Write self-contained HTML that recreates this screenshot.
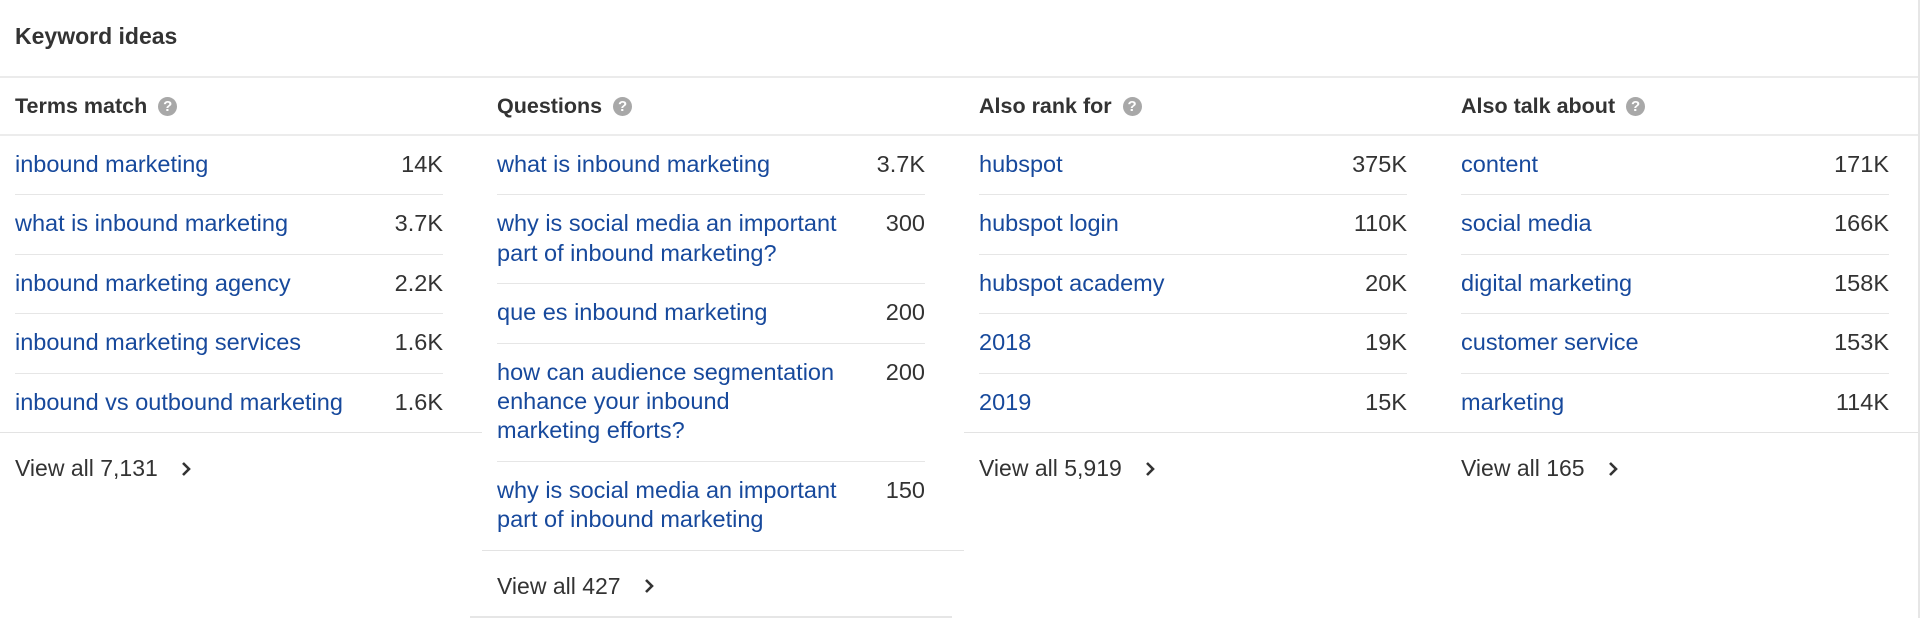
<!DOCTYPE html>
<html><head><meta charset="utf-8"><style>
*{box-sizing:border-box;margin:0;padding:0}
body{width:1920px;height:618px;background:#fff;font-family:"Liberation Sans",sans-serif;color:#333;overflow:hidden;position:relative}
.wrap{position:absolute;left:0;top:0;width:1920px;height:618px;border-right:2px solid #e6e6e6}
.title{height:78px;line-height:72px;padding-left:15px;font-weight:bold;font-size:23px;color:#333;border-bottom:2px solid #ebebeb}
.cols{display:flex}
.col{width:482px;flex:0 0 482px}
.col:last-child{width:472px;flex:0 0 472px}
.hd{height:58px;display:flex;align-items:center;padding-left:15px;font-weight:bold;font-size:21.5px;color:#333;border-bottom:2px solid #ececec}
.q{display:inline-block;width:19px;height:19px;border-radius:50%;background:#a8a8a8;color:#fff;font-size:15px;line-height:19px;text-align:center;margin-left:11px;font-weight:bold}
.rows{padding:0 39px 0 15px}
.col:last-child .rows{padding-right:29px}
.row{display:flex;justify-content:space-between;padding:14px 0 15px;border-bottom:1px solid #e6e6e6;font-size:23.5px;line-height:29.4px}
.row:last-child{border-bottom:none}
.row a{color:#17499c;text-decoration:none}
.row span{color:#333;padding-left:20px}
.ft{border-top:1px solid #e3e3e3;height:72px;padding-left:15px;display:flex;align-items:center;font-size:23px;color:#333}
.ft svg{margin-left:22px}
</style></head><body><div class="wrap">
<div class="title">Keyword ideas</div>
<div class="cols">
<div class="col"><div class="hd">Terms match<span class="q">?</span></div>
<div class="rows">
<div class="row"><a>inbound marketing</a><span>14K</span></div>
<div class="row"><a>what is inbound marketing</a><span>3.7K</span></div>
<div class="row"><a>inbound marketing agency</a><span>2.2K</span></div>
<div class="row"><a>inbound marketing services</a><span>1.6K</span></div>
<div class="row"><a>inbound vs outbound marketing</a><span>1.6K</span></div>
</div>
<div class="ft">View all 7,131<svg width="12" height="18" viewBox="0 0 12 18"><path d="M3 3l6 6-6 6" fill="none" stroke="#333" stroke-width="2.6"/></svg></div></div>
<div class="col"><div class="hd">Questions<span class="q">?</span></div>
<div class="rows">
<div class="row"><a>what is inbound marketing</a><span>3.7K</span></div>
<div class="row"><a>why is social media an important<br>part of inbound marketing?</a><span>300</span></div>
<div class="row"><a>que es inbound marketing</a><span>200</span></div>
<div class="row"><a>how can audience segmentation<br>enhance your inbound<br>marketing efforts?</a><span>200</span></div>
<div class="row"><a>why is social media an important<br>part of inbound marketing</a><span>150</span></div>
</div>
<div class="ft">View all 427<svg width="12" height="18" viewBox="0 0 12 18"><path d="M3 3l6 6-6 6" fill="none" stroke="#333" stroke-width="2.6"/></svg></div></div>
<div class="col"><div class="hd">Also rank for<span class="q">?</span></div>
<div class="rows">
<div class="row"><a>hubspot</a><span>375K</span></div>
<div class="row"><a>hubspot login</a><span>110K</span></div>
<div class="row"><a>hubspot academy</a><span>20K</span></div>
<div class="row"><a>2018</a><span>19K</span></div>
<div class="row"><a>2019</a><span>15K</span></div>
</div>
<div class="ft">View all 5,919<svg width="12" height="18" viewBox="0 0 12 18"><path d="M3 3l6 6-6 6" fill="none" stroke="#333" stroke-width="2.6"/></svg></div></div>
<div class="col"><div class="hd">Also talk about<span class="q">?</span></div>
<div class="rows">
<div class="row"><a>content</a><span>171K</span></div>
<div class="row"><a>social media</a><span>166K</span></div>
<div class="row"><a>digital marketing</a><span>158K</span></div>
<div class="row"><a>customer service</a><span>153K</span></div>
<div class="row"><a>marketing</a><span>114K</span></div>
</div>
<div class="ft">View all 165<svg width="12" height="18" viewBox="0 0 12 18"><path d="M3 3l6 6-6 6" fill="none" stroke="#333" stroke-width="2.6"/></svg></div></div>
</div>
<div style="position:absolute;left:470px;top:616px;width:482px;height:2px;background:#e6e6e6"></div>
</div></body></html>
